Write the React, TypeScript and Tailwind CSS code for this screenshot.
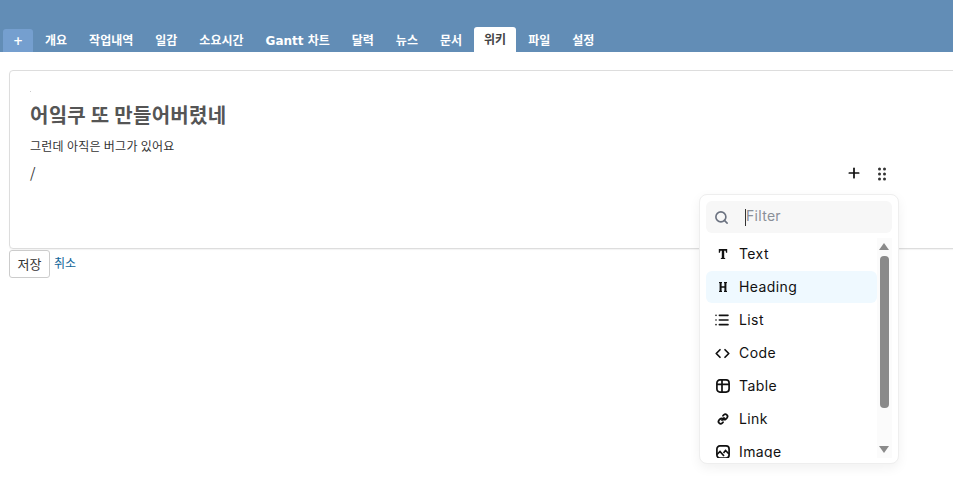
import { Code, List, Plus, Search } from 'lucide-react'

const tabs = ['개요', '작업내역', '일감', '소요시간', 'Gantt 차트', '달력', '뉴스', '문서', '위키', '파일', '설정']

function TextIcon() {
  return (
    <svg viewBox="0 0 10 12" className="w-[10px] h-[12px]" fill="#111">
      <path d="M0.800 1h8.400v3.800H8L7.600 2.800H6.200v7l1 .4V11H2.800v-.8l1-.4v-7H2.400L2 4.800H0.800z" />
    </svg>
  )
}

function HeadingIcon() {
  return (
    <svg viewBox="0 0 10 12" className="w-[10px] h-[12px]" fill="#111">
      <path d="M1 1h3v1l-.4.200v3h2.800v-3L6 2V1h3v1l-.6.200v7.600L9 10v1H6v-1l.4-.2V6.800H3.600v3L4 10v1H1v-1l.6-.2V2.200L1 2z" />
    </svg>
  )
}

function TableIcon() {
  return (
    <svg viewBox="0 0 14 14" className="w-[14px] h-[14px]" fill="none" stroke="#111" strokeWidth="1.700">
      <rect x="0.900" y="0.900" width="12.200" height="12.200" rx="3" />
      <path d="M0.900 5.300h12.200M6 0.900v12.200" />
    </svg>
  )
}

function LinkIcon() {
  return (
    <svg viewBox="0 0 12 12" className="w-[12px] h-[12px]" fill="none" stroke="#111" strokeWidth="1.800" strokeLinecap="round">
      <path d="M5 7l2-2M6 2.800l.8-1a2.200 2.200 0 0 1 3.200 3L8.800 6a2 2 0 0 1-2.300.4" />
      <path d="M6 9.200l-.8 1a2.200 2.200 0 0 1-3.200-3L3.200 6a2 2 0 0 1 2.300-.4" />
    </svg>
  )
}

function ImageIcon() {
  return (
    <svg viewBox="0 0 14 14" className="w-[14px] h-[14px]" fill="none" stroke="#111" strokeWidth="1.700">
      <rect x="0.900" y="0.900" width="12.200" height="12.200" rx="3" />
      <path d="M1 9.500l3-3 4 4.500M7.500 8l2-2.500 3.500 3.500" />
    </svg>
  )
}

const items = [
  { label: 'Text', icon: <TextIcon /> },
  { label: 'Heading', icon: <HeadingIcon />, active: true },
  { label: 'List', icon: <List className="-ml-[2px] w-[16px] h-[16px]" color="#111" strokeWidth={2.4} /> },
  { label: 'Code', icon: <Code className="w-[15px] h-[15px]" color="#111" strokeWidth={2.8} /> },
  { label: 'Table', icon: <TableIcon /> },
  { label: 'Link', icon: <LinkIcon /> },
  { label: 'Image', icon: <ImageIcon /> },
]

export default function App() {
  return (
    <div className="relative h-[497px] w-full overflow-hidden bg-white font-['Noto_Sans_CJK_KR','Malgun_Gothic',sans-serif] text-[#333]">
      {/* Header */}
      <div className="flex h-[52px] items-end bg-[#628db6] pl-[3px]">
        <div className="mr-[2px] flex h-[23px] w-[30px] items-center justify-center rounded-t-[3px] bg-[#759fcf] font-['DejaVu_Sans',sans-serif] text-[12px] font-bold text-white">
          +
        </div>
        {tabs.map((tab) => (
          <div
            key={tab}
            className={`mr-[2px] flex items-center rounded-t-[3px] px-[10px] font-['DejaVu_Sans','Noto_Sans_CJK_KR',sans-serif] text-[12px] font-bold ${
              tab === '위키' ? 'h-[25px] bg-white text-[#444]' : 'h-[23px] text-white'
            }`}
          >
            {tab}
          </div>
        ))}
      </div>

      {/* Editor */}
      <div className="ml-[9px] -mr-2 mt-[18px] h-[179px] rounded-[4px] border border-[#ddd] pl-5 pt-[20px] shadow-[0_1px_1px_rgba(0,0,0,0.05)]">
        <div className="h-[1px] w-[1px] bg-[#ccc]" />
        <h1 className="mt-[9px] text-[20px] font-bold leading-[28px] tracking-[0.27px] text-[#555]">어잌쿠 또 만들어버렸네</h1>
        <p className="mt-[8px] text-[12px] leading-[18px] tracking-[0.27px]">그런데 아직은 버그가 있어요</p>
        <p className="mt-[8px] text-[14px] leading-[18px]">/</p>
      </div>

      {/* Actions */}
      <div className="ml-[9px] mt-[1px] flex items-start gap-1">
        <button className="h-[28px] w-[41px] rounded-[3px] border border-[#ccc] bg-white text-[13px] text-[#333]">저장</button>
        <a className="mt-[5px] text-[12px] leading-[16px] text-[#169]">취소</a>
      </div>

      {/* Block controls */}
      <Plus className="absolute left-[846px] top-[165px] h-[16px] w-[16px]" color="#111" strokeWidth={2.6} />
      <svg viewBox="0 0 10 14" className="absolute left-[877px] top-[167px] h-[14px] w-[10px]" fill="#333">
        <circle cx="2.500" cy="2" r="1.500" />
        <circle cx="7.500" cy="2" r="1.500" />
        <circle cx="2.500" cy="7" r="1.500" />
        <circle cx="7.500" cy="7" r="1.500" />
        <circle cx="2.500" cy="12" r="1.500" />
        <circle cx="7.500" cy="12" r="1.500" />
      </svg>

      {/* Slash menu */}
      <div className="absolute left-[699px] top-[194px] h-[270px] w-[200px] rounded-[8px] border border-[#eee] bg-white p-[6px] font-['Inter',sans-serif] shadow-[0_4px_12px_rgba(0,0,0,0.06)]">
        <div className="flex h-[32px] items-center rounded-[6px] bg-[#f7f7f7] pl-[8px]">
          <Search className="h-[15px] w-[15px]" color="#6b7280" strokeWidth={2.6} />
          <span className="ml-[16px] h-[17px] w-[1px] bg-[#333]" />
          <span className="-mt-[3px] text-[14px] tracking-[0.3px] text-[#8a8f98]">Filter</span>
        </div>
        <div className="mt-[5px] flex h-[220px]">
          <div className="h-full w-[171px] overflow-hidden">
            {items.map((item) => (
              <div
                key={item.label}
                className={`mb-[1px] flex h-[32px] items-center rounded-[6px] text-[14px] tracking-[0.4px] text-[#111] ${
                  item.active ? 'bg-[#eff9ff]' : ''
                }`}
              >
                <span className="flex w-[33px] items-center justify-center">{item.icon}</span>
                <span className="-mt-[2px]">{item.label}</span>
              </div>
            ))}
          </div>
          <div className="flex h-full w-[15px] flex-col items-end bg-[#fbfbfb] pr-[3px]">
            <div className="mt-[5px] h-0 w-0 border-x-[5px] border-b-[7px] border-x-transparent border-b-[#8a8a8a]" />
            <div className="mt-[6px] h-[152px] w-[9px] rounded-[4px] bg-[#8a8a8a]" />
            <div className="mt-[38px] h-0 w-0 border-x-[5px] border-t-[7px] border-x-transparent border-t-[#8a8a8a]" />
          </div>
        </div>
      </div>
    </div>
  )
}
